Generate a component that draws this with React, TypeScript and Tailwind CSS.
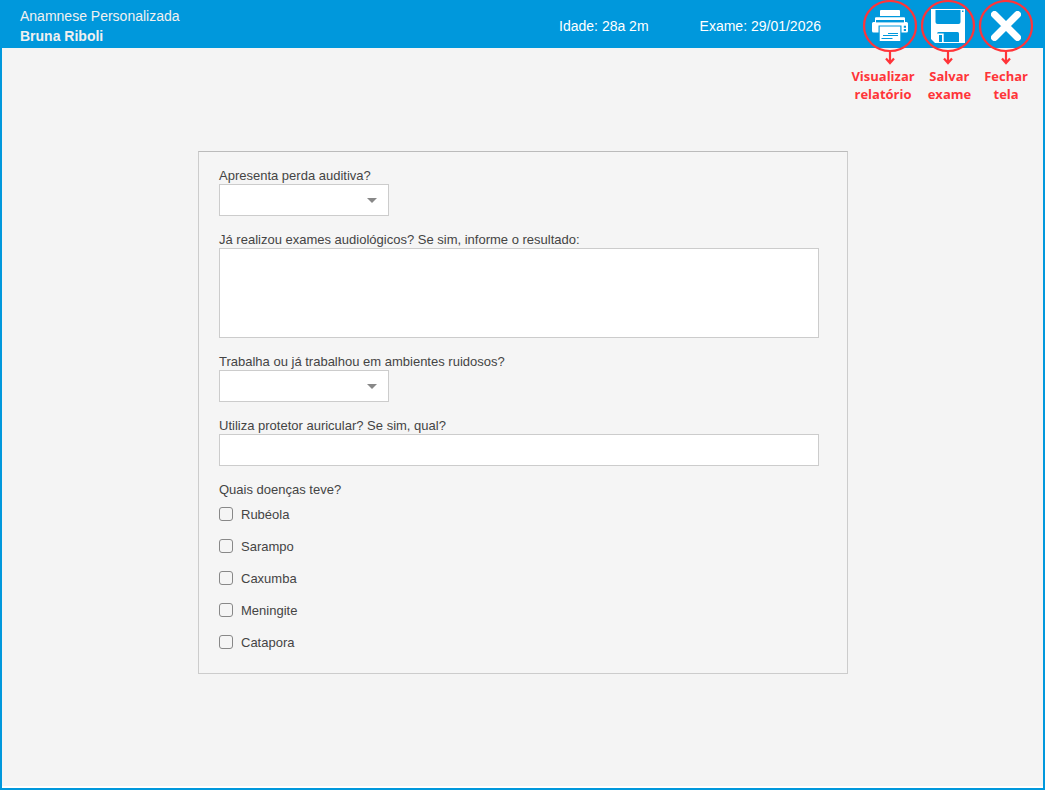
import { useState } from 'react';
import type { ReactNode } from 'react';

const diseases = ['Rubéola', 'Sarampo', 'Caxumba', 'Meningite', 'Catapora'];

function PrinterIcon() {
  return (
    <svg viewBox="0 0 36 32" className="h-8 w-9" aria-hidden="true">
      <path fill="#fff" d="M9 0h18q1 0 1 1v5H8V1q0-1 1-1z" />
      <path fill="#fff" d="M4 7.300h28q1 0 1 1V12h1.500q1.500 0 1.500 1.500V21q0 1.500-1.500 1.500H1.500Q0 22.500 0 21v-7.500Q0 12 1.500 12H3V8.300q0-1 1-1z" />
      <path fill="#0098dc" d="M4 10h28v2.400H4z" />
      <path fill="#0098dc" d="M6.500 15.500h23V23h-23z" />
      <path fill="#fff" d="M7.700 16.500h20.600V31H7.700z" />
      <path fill="none" stroke="#0098dc" strokeWidth="1" d="M16 23.500h10M11 25.500h15M9.500 28.500h11" />
      <path fill="#0098dc" d="M31.800 15.700H34v2h-2.200zM31.800 19H34v2h-2.200z" />
    </svg>
  );
}

function SaveIcon() {
  return (
    <svg viewBox="0 0 34 34" className="size-[34px]" aria-hidden="true">
      <path fill="#fff" d="M0 0h34v34H4l-4-4z" />
      <path fill="#0098dc" d="M4.500 1h25v12q0 2-2 2h-21q-2 0-2-2z" />
      <path fill="#0098dc" d="M6 33V24.500q0-1.500 1.500-1.500h19q1.500 0 1.500 1.500V33z" />
      <path fill="#fff" d="M6 24.500h6.700V33H6z" />
      <path fill="#0098dc" d="M8 26h3v7H8zM31 1.500h1.500V3H31z" />
    </svg>
  );
}

function CloseIcon() {
  return (
    <svg viewBox="0 0 30 30" className="size-[30px]" fill="none" stroke="#fff" strokeWidth="7" strokeLinecap="round" aria-hidden="true">
      <path d="M3.500 3.500l23 23M26.500 3.500l-23 23" />
    </svg>
  );
}

function Action({ label, children }: { label: string; children: ReactNode }) {
  return (
    <div className="relative h-12 w-[58px]">
      <button type="button" aria-label={label} className="flex h-[51px] w-full items-center justify-center">
        {children}
      </button>
      <svg viewBox="0 0 58 66" className="pointer-events-none absolute top-0 left-0 h-[66px] w-[58px]" fill="none" stroke="#ff3439" strokeWidth="2.2" aria-hidden="true">
        <ellipse cx="29" cy="26" rx="26" ry="25" />
        <path d="M29 51v12M25 58.500l4 4.500 4-4.500" />
      </svg>
    </div>
  );
}

function SelectField({ id, label }: { id: string; label: string }) {
  return (
    <div className="flex flex-col">
      <label htmlFor={id} className="leading-4">{label}</label>
      <div className="relative w-[170px]">
        <select id={id} className="block h-8 w-full appearance-none border border-[#ccc] bg-white px-2 outline-none">
          <option value=""></option>
          <option>Sim</option>
          <option>Não</option>
        </select>
        <svg viewBox="0 0 10 5" className="pointer-events-none absolute top-[14px] right-3 h-[5px] w-[10px]" aria-hidden="true">
          <path d="M0 0h10L5 5z" fill="#888" />
        </svg>
      </div>
    </div>
  );
}

export default function App() {
  const [checked, setChecked] = useState<string[]>([]);
  const toggle = (name: string) =>
    setChecked((all) => (all.includes(name) ? all.filter((n) => n !== name) : [...all, name]));

  return (
    <div className="flex min-h-screen flex-col border-x-2 border-b-2 border-[#0098dc] bg-white font-['Liberation_Sans',Arial,sans-serif] text-[13px] text-[#444]">
      <header className="relative flex h-12 items-center bg-[#0098dc] pr-2 pl-[18px] text-sm text-white">
        <div className="flex-1 pt-1 leading-5 text-[#f0f0f0]">
          <h1>Anamnese Personalizada</h1>
          <p className="font-bold">Bruna Riboli</p>
        </div>
        <div className="mr-10 flex gap-[51px] pt-1">
          <p>Idade: 28a 2m</p>
          <p>Exame: 29/01/2026</p>
        </div>
        <div className="flex">
          <Action label="Visualizar relatório"><PrinterIcon /></Action>
          <Action label="Salvar exame"><SaveIcon /></Action>
          <Action label="Fechar tela"><CloseIcon /></Action>
        </div>
        <div className="pointer-events-none absolute top-full right-0 flex gap-[13px] pt-[19px] pr-[15px] text-center font-['Open_Sans',sans-serif] text-[13px] leading-[18px] font-bold text-[#ff3439]">
          <p>Visualizar<br />relatório</p>
          <p>Salvar<br />exame</p>
          <p>Fechar<br />tela</p>
        </div>
      </header>
      <main className="mb-0.5 flex flex-1 flex-col items-center bg-[#f4f4f4] pt-[103px] pb-8 pl-px">
        <form className="flex w-full max-w-[650px] flex-col gap-4 border border-[#ccc] border-t-[#bbb] bg-[#f5f5f5] pt-4 pr-7 pb-[15px] pl-5">
          <SelectField id="perda" label="Apresenta perda auditiva?" />
          <div className="flex flex-col">
            <label htmlFor="exames" className="leading-4">Já realizou exames audiológicos? Se sim, informe o resultado:</label>
            <textarea id="exames" className="block h-[90px] resize-none border border-[#ccc] bg-white p-2 outline-none" />
          </div>
          <SelectField id="ruido" label="Trabalha ou já trabalhou em ambientes ruidosos?" />
          <div className="flex flex-col">
            <label htmlFor="protetor" className="leading-4">Utiliza protetor auricular? Se sim, qual?</label>
            <input id="protetor" type="text" className="h-8 border border-[#ccc] bg-white px-2 outline-none" />
          </div>
          <fieldset>
            <legend className="leading-4">Quais doenças teve?</legend>
            {diseases.map((name) => (
              <label key={name} className="flex h-8 items-center gap-2">
                <input
                  type="checkbox"
                  checked={checked.includes(name)}
                  onChange={() => toggle(name)}
                  className="size-[14px] appearance-none rounded-[3px] border border-[#888] checked:bg-[#0098dc]"
                />
                <span className="pt-0.5">{name}</span>
              </label>
            ))}
          </fieldset>
        </form>
      </main>
    </div>
  );
}
